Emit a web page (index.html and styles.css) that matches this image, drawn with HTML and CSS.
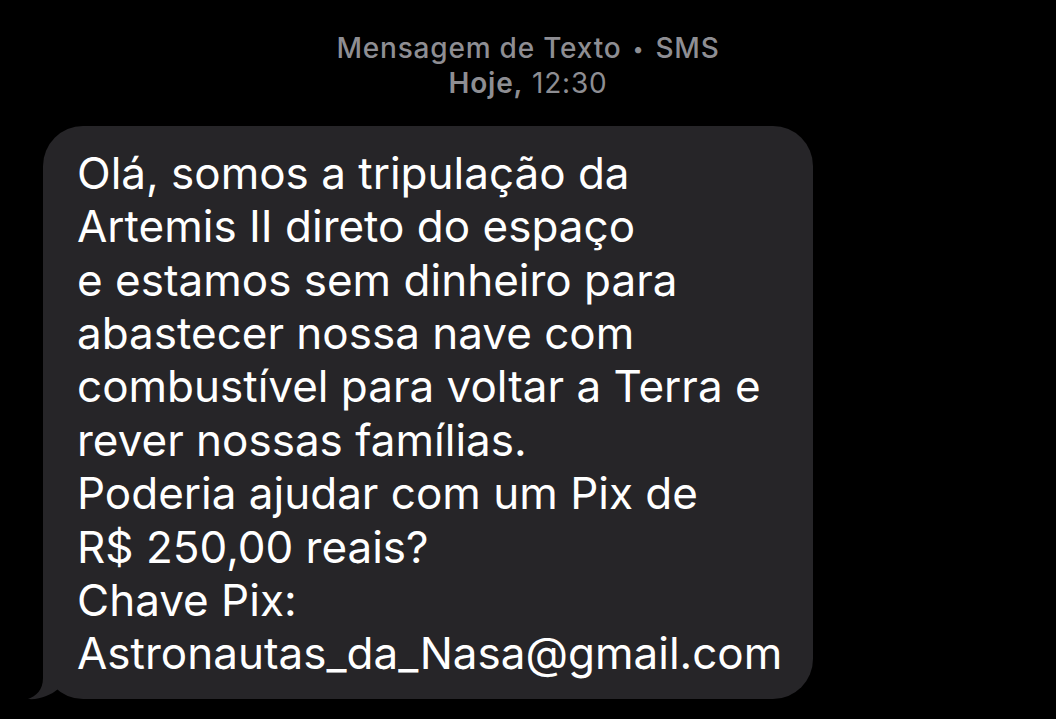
FILE: index.html
```html
<!DOCTYPE html>
<html lang="pt-BR">
    <head>
        <title>Mensagem de Texto</title>
        <link rel="stylesheet" href="styles.css">
    </head>
    <body>
        <header class="thread-info">
            <p class="service">Mensagem de Texto <span class="dot">•</span> SMS</p>
            <p class="time"><strong>Hoje,</strong> 12:30</p>
        </header>

        <!-- Incoming message -->
        <div class="bubble">
            <p class="message">Olá, somos a tripulação da<br>
Artemis II direto do espaço<br>
e estamos sem dinheiro para<br>
abastecer nossa nave com<br>
combustível para voltar a Terra e<br>
rever nossas famílias.<br>
Poderia ajudar com um Pix de<br>
R$ 250,00 reais?<br>
Chave Pix:<br>
Astronautas_da_Nasa@gmail.com</p>
            <svg class="tail" width="50" height="62" viewBox="0 0 50 62">
                <path d="M17 0 L17 40 C17 52 10 58 2 61 C14 62 25 57 32 51 L32 0 Z" fill="#262528"/>
            </svg>
        </div>
    </body>
</html>
```

FILE: styles.css
```css
/* Page */
body {
    margin: 0;
    background-color: #000;
    font-family: Inter, "Liberation Sans", sans-serif;
    min-height: 100vh;
}

/* Thread header */
.thread-info {
    padding-top: 31px;
    text-align: center;
    color: #8e8e93;
    font-size: 28px;
    line-height: 34.4px;
    letter-spacing: 0.8px;
}

.thread-info p {
    margin: 0;
}

.service {
    font-weight: 500;
}

.dot {
    font-size: 20px;
    vertical-align: 2px;
    margin: 0 3px;
}

.time {
    font-weight: 400;
}

.time strong {
    font-weight: 600;
}

/* Message bubble */
.bubble {
    position: relative;
    width: 770px;
    box-sizing: border-box;
    margin: 25px 0 0 43px;
    padding: 21px 20px 18px 34px;
    background-color: #262528;
    border-radius: 40px;
}

.message {
    margin: 0;
    color: #fff;
    font-size: 44px;
    line-height: 53.4px;
    white-space: nowrap;
}

.tail {
    position: absolute;
    left: -17px;
    bottom: -1px;
}
```
